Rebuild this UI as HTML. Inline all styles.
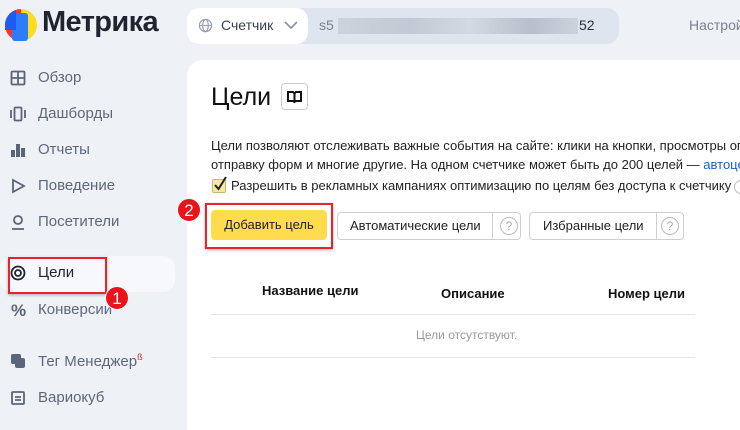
<!DOCTYPE html><html><head><meta charset="utf-8"><style>
*{margin:0;padding:0;box-sizing:border-box}
body{width:740px;height:423px;overflow:hidden;background:#eef1f6;font-family:"Liberation Sans",sans-serif;position:relative}
.a{position:absolute}
.nav{position:absolute;left:38px;font-size:15px;color:#5f687b}
.ic{position:absolute;left:10px;width:16px;height:16px}
.main{position:absolute;left:187px;top:60px;width:560px;height:370px;background:#fff;border-radius:16px 0 0 0}
.btn{position:absolute;border:1px solid #cfcfcf;border-radius:4px;background:#fff;font-size:13px;color:#222;height:28px;line-height:26px}
.q{position:absolute;width:18px;height:18px;border:1px solid #bbb;border-radius:50%;color:#aaa;font-size:12px;text-align:center;line-height:16px}
.badge{position:absolute;width:24px;height:24px;border-radius:50%;background:#e8141a;color:#fff;font-size:17px;text-align:center;line-height:24px;border:1px solid #fff}
</style></head><body>
<svg class="a" style="left:5px;top:8px" width="32" height="34" viewBox="0 0 32 34"><circle cx="16" cy="17" r="16" fill="#ffdb1f"/><path d="M16 1A16 16 0 0 0 0 17 16 16 0 0 0 16 33Z" fill="#f33"/><rect x="7" y="5" width="16" height="28" rx="3" fill="#2d7cff"/><path d="M0 17A16 16 0 0 1 11 2L11 22 0 22Z" fill="#1c5bf5"/></svg>
<div class="a" style="left:42px;top:6px;font-size:29px;font-weight:bold;color:#1f2430;letter-spacing:-0.6px">Метрика</div>
<div class="a" style="left:187px;top:8px;width:432px;height:36px;background:#dfe5ee;border-radius:12px"></div>
<div class="a" style="left:187px;top:8px;width:121px;height:36px;background:#fff;border-radius:12px"></div>
<svg class="a" style="left:198px;top:18px" width="15" height="15" viewBox="0 0 16 16" fill="none" stroke="#9aa1b0" stroke-width="1.3"><circle cx="8" cy="8" r="6.5"/><ellipse cx="8" cy="8" rx="3" ry="6.5"/><path d="M1.5 8h13"/></svg>
<div class="a" style="left:221px;top:17px;font-size:14px;color:#3c4150">Счетчик</div>
<svg class="a" style="left:284px;top:21px" width="14" height="9" viewBox="0 0 14 9" fill="none" stroke="#8a91a0" stroke-width="1.6"><path d="M1 1l6 6 6-6"/></svg>
<div class="a" style="left:319px;top:17px;font-size:14px;color:#7a8090">s5</div>
<div class="a" style="left:338px;top:18px;width:240px;height:16px;background:linear-gradient(90deg,#cdd3dd,#c3c9d4 30%,#d4d9e2 55%,#b8bfcb 80%,#cdd3dd)"></div>
<div class="a" style="left:579px;top:17px;font-size:14px;color:#2a2f3a">52</div>
<div class="a" style="left:689px;top:17px;font-size:14px;color:#7a8090">Настрой</div>

<svg class="ic" style="top:70px" viewBox="0 0 16 16" fill="none" stroke="#5b6478" stroke-width="1.8"><rect x="1.5" y="1.5" width="13" height="13" rx="1"/><path d="M8 1.5v13M1.5 8h13"/></svg>
<div class="nav" style="top:69px">Обзор</div>
<svg class="ic" style="top:106px" viewBox="0 0 16 16" fill="none" stroke="#5b6478" stroke-width="1.8"><rect x="4.5" y="1.5" width="7" height="13" rx="1"/><path d="M1 4v8M15 4v8"/></svg>
<div class="nav" style="top:105px">Дашборды</div>
<svg class="ic" style="top:142px" viewBox="0 0 16 16" fill="#5b6478"><rect x="1" y="8" width="4" height="7"/><rect x="6" y="2" width="4" height="13"/><rect x="11" y="6" width="4" height="9"/></svg>
<div class="nav" style="top:141px">Отчеты</div>
<svg class="ic" style="top:178px" viewBox="0 0 16 16" fill="none" stroke="#5b6478" stroke-width="1.8"><path d="M3 2l11 6-11 6z"/></svg>
<div class="nav" style="top:177px">Поведение</div>
<svg class="ic" style="top:214px" viewBox="0 0 16 16" fill="none" stroke="#5b6478" stroke-width="1.8"><circle cx="8" cy="6" r="4"/><path d="M2 15h12"/></svg>
<div class="nav" style="top:213px">Посетители</div>
<div class="a" style="left:0;top:256px;width:175px;height:36px;background:#f7f8fb;border-radius:12px"></div>
<svg class="ic" style="top:265px" viewBox="0 0 16 16" fill="none" stroke="#1f2430" stroke-width="1.8"><circle cx="8" cy="8" r="6.5"/><circle cx="8" cy="8" r="3"/></svg>
<div class="nav" style="top:264px;color:#1f2430">Цели</div>
<div class="a" style="left:8px;top:257px;width:99px;height:37px;border:2px solid #e8242a;box-shadow:0 1px 3px rgba(0,0,0,.3)"></div>
<div class="a" style="left:11px;top:301px;font-size:17px;font-weight:bold;color:#5b6478">%</div>
<div class="nav" style="top:301px">Конверсии</div>
<div class="badge" style="left:105px;top:286px">1</div>
<svg class="ic" style="top:353px" viewBox="0 0 16 16" fill="#5b6478"><rect x="1" y="1" width="10" height="10" rx="2"/><rect x="5" y="5" width="10" height="10" rx="2"/></svg>
<div class="nav" style="top:352px">Тег Менеджер<sup style="color:#e8242a;font-size:9px">ß</sup></div>
<svg class="ic" style="top:390px" viewBox="0 0 16 16" fill="none" stroke="#5b6478" stroke-width="1.8"><rect x="2" y="2" width="12" height="12" rx="1"/><path d="M5 7h6M5 10h6"/></svg>
<div class="nav" style="top:389px">Вариокуб</div>

<div class="main"></div>
<div class="a" style="left:211px;top:83px;font-size:25px;color:#111">Цели</div>
<div class="a" style="left:281px;top:83px;width:27px;height:27px;border:1px solid #ccc;border-radius:4px"></div>
<svg class="a" style="left:287px;top:90px" width="15" height="13" viewBox="0 0 15 13" fill="none" stroke="#111" stroke-width="2"><path d="M1 2h5l1.5 1.5L9 2h5v9H9l-1.5 1L6 11H1z M7.5 3.5v8"/></svg>
<div class="a" style="left:211px;top:136px;font-size:13px;line-height:19px;color:#222;white-space:nowrap">Цели позволяют отслеживать важные события на сайте: клики на кнопки, просмотры оп<br>отправку форм и многие другие. На одном счетчике может быть до 200 целей — <span style="color:#1a5fd0">автоцел</span></div>
<div class="a" style="left:212px;top:179px;width:14px;height:14px;background:#fbe8a0;border:1px solid #c9b870;border-radius:2px"></div>
<svg class="a" style="left:213px;top:176px" width="15" height="16" viewBox="0 0 15 16" fill="none" stroke="#222" stroke-width="2"><path d="M2 9l3.5 4L13 1"/></svg>
<div class="a" style="left:231px;top:178px;font-size:13px;color:#222;white-space:nowrap">Разрешить в рекламных кампаниях оптимизацию по целям без доступа к счетчику</div>
<div class="a" style="left:734px;top:180px;width:14px;height:14px;border:1px solid #bbb;border-radius:50%"></div>

<div class="a" style="left:211px;top:210px;width:116px;height:30px;background:#ffdb4d;border-radius:4px;font-size:13px;color:#222;text-align:center;line-height:30px">Добавить цель</div>
<div class="a" style="left:205px;top:203px;width:128px;height:46px;border:2px solid #e8242a;box-shadow:0 1px 3px rgba(0,0,0,.3)"></div>
<div class="badge" style="left:177px;top:198px">2</div>
<div class="btn" style="left:337px;top:212px;width:184px"><span style="position:absolute;left:12px">Автоматические цели</span><span style="position:absolute;left:154px;top:-1px;height:28px;border-left:1px solid #cfcfcf"></span></div>
<div class="q" style="left:500px;top:217px">?</div>
<div class="btn" style="left:529px;top:212px;width:155px"><span style="position:absolute;left:13px">Избранные цели</span><span style="position:absolute;left:126px;top:-1px;height:28px;border-left:1px solid #cfcfcf"></span></div>
<div class="q" style="left:661px;top:217px">?</div>

<div class="a" style="left:262px;top:283px;font-size:13px;font-weight:bold;color:#111">Название цели</div>
<div class="a" style="left:441px;top:286px;font-size:13px;font-weight:bold;color:#111">Описание</div>
<div class="a" style="left:608px;top:286px;font-size:13px;font-weight:bold;color:#111">Номер цели</div>
<div class="a" style="left:211px;top:314px;width:484px;height:1px;background:#e4e4e4"></div>
<div class="a" style="left:416px;top:328px;font-size:12px;color:#999">Цели отсутствуют.</div>
<div class="a" style="left:211px;top:357px;width:484px;height:1px;background:#e4e4e4"></div>
</body></html>
